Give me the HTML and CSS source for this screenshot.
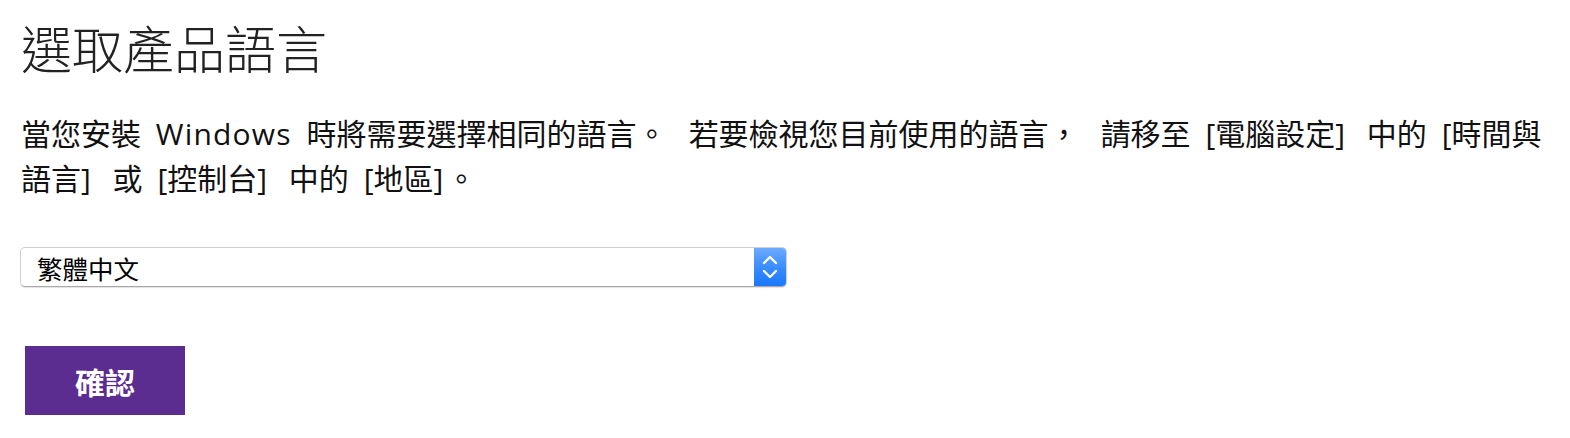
FILE: index.html
```html
<!DOCTYPE html>
<html lang="zh-Hant">
<head>
<meta charset="utf-8">
<title>選取產品語言</title>
<link rel="stylesheet" href="styles.css">
</head>
<body>
<main class="page">
  <h1 class="title">選取產品語言</h1>
  <p class="intro">當您安裝 <span class="brand">Windows</span> 時將需要選擇相同的語言<span class="punct">。</span>若要檢視您目前使用的語言<span class="punct">，</span>請移至 <span class="ui gap">[電腦設定]</span> 中的 <span class="ui gap">[時間與語言]</span> 或 <span class="ui gap">[控制台]</span> 中的 <span class="ui">[地區]</span>。</p>
  <div class="select-box">
    <select class="select">
      <option>繁體中文</option>
    </select>
    <span class="stepper">
      <svg width="16" height="24" viewBox="0 0 16 24" aria-hidden="true">
        <path d="M2 8 L8 2 L14 8" fill="none" stroke="#fff" stroke-width="2.3" stroke-linecap="round" stroke-linejoin="round"/>
        <path d="M2 16 L8 22 L14 16" fill="none" stroke="#fff" stroke-width="2.3" stroke-linecap="round" stroke-linejoin="round"/>
      </svg>
    </span>
  </div>
  <button class="confirm" type="button">確認</button>
</main>
</body>
</html>
```

FILE: styles.css
```css
html, body {
  margin: 0;
  padding: 0;
  background: #ffffff;
}

body {
  font-family: "Open Sans", "Noto Sans CJK TC", sans-serif;
  color: #222222;
}

.page {
  display: flex;
  flex-direction: column;
  align-items: flex-start;
  padding: 17px 14px 0 21px;
}

.title {
  margin: 0;
  font-family: "Noto Sans CJK TC", sans-serif;
  font-weight: 300;
  font-size: 51px;
  line-height: 61px;
  color: #222222;
}

.intro {
  margin: 33px 0 0 0;
  width: 1522px;
  font-family: "Open Sans", "Noto Sans CJK TC", sans-serif;
  font-size: 30px;
  line-height: 45px;
  word-spacing: 4px;
  color: #111111;
}

.brand {
  margin: 0 3px;
  letter-spacing: 1.2px;
}

.ui {
  padding: 0 3px;
}

.ui.gap {
  margin-right: 7px;
}

.punct {
  margin-right: 22px;
}

.select-box {
  margin-top: 46px;
  margin-left: -1px;
  display: flex;
  width: 765px;
  height: 38px;
  border: 1px solid #d0d0d0;
  border-bottom-color: #a9a9a9;
  border-radius: 5px;
  box-shadow: 0 1px 1px rgba(0, 0, 0, 0.12);
  background: #ffffff;
  overflow: hidden;
}

.select {
  flex: 1;
  -webkit-appearance: none;
  appearance: none;
  border: none;
  outline: none;
  background: transparent;
  margin: 0;
  padding: 0 0 0 16px;
  font-family: "Noto Sans CJK TC", sans-serif;
  font-size: 25.5px;
  color: #000000;
  height: 38px;
}

.stepper {
  width: 32px;
  display: flex;
  align-items: center;
  justify-content: center;
  background: linear-gradient(to bottom, #6cabff 0%, #3b8dff 50%, #1a78fb 100%);
}

.confirm {
  margin-top: 59px;
  margin-left: 4px;
  width: 160px;
  height: 69px;
  border: none;
  border-radius: 0;
  background: #5c2d91;
  color: #ffffff;
  font-family: "Noto Sans CJK TC", sans-serif;
  font-weight: 700;
  font-size: 30px;
  padding: 0;
  cursor: pointer;
}
```
